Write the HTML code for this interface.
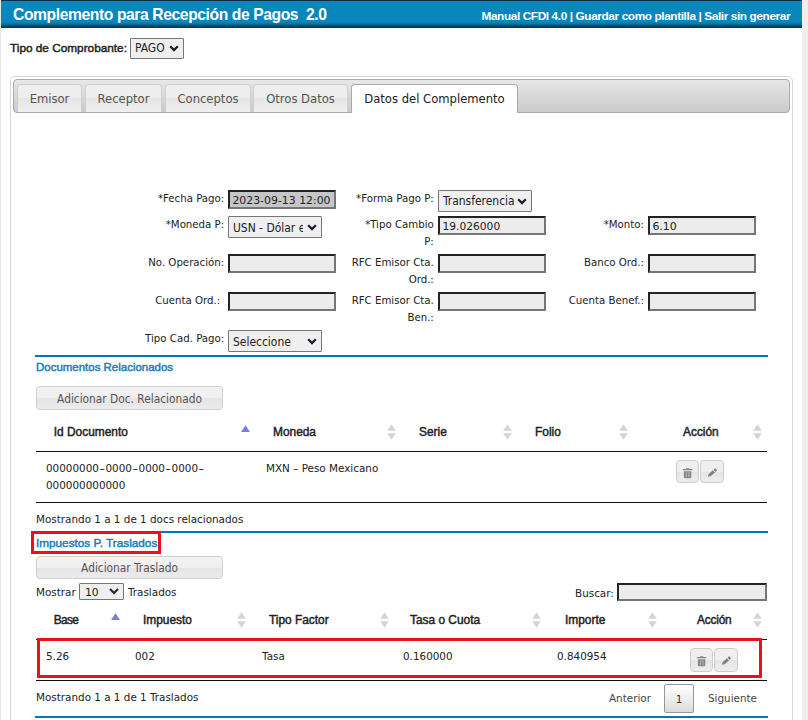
<!DOCTYPE html>
<html lang="es">
<head>
<meta charset="utf-8">
<title>Complemento para Recepción de Pagos 2.0</title>
<style>
html,body{margin:0;padding:0;}
body{width:808px;height:720px;position:relative;overflow:hidden;background:#fff;
  font-family:"DejaVu Sans Condensed","DejaVu Sans","Liberation Sans",sans-serif;font-size:11.4px;color:#222;}
.abs{position:absolute;white-space:nowrap;}
.tb{font-family:"Liberation Sans",sans-serif;font-weight:bold;}
.sbd{font-family:"Liberation Sans",sans-serif;font-weight:normal;-webkit-text-stroke:0.45px currentColor;}
/* header */
#hdr{position:absolute;left:1px;top:0;width:801px;height:28px;
  background:linear-gradient(#0a3046 0,#0a3046 1px,#0987bc 1px,#0987bc 22px,#0873a3 24px,#0a4a6e 26px,#0b2f48 28px);}
#edge{position:absolute;left:0;top:0;width:1px;height:720px;background:#e8e8e8;}
#sb{position:absolute;left:802px;top:0;width:6px;height:720px;background:#eeeeee;}
#title{left:13px;top:5.5px;font-size:15.7px;letter-spacing:-0.42px;line-height:18px;color:#fff;}
#links{left:481.5px;top:8.5px;font-size:11.8px;letter-spacing:-0.385px;line-height:14px;color:#fff;}
/* tabs */
#box{position:absolute;left:10px;top:76px;width:781px;height:660px;border:1px solid #d6d6d6;border-radius:5px;}
#nav{position:absolute;left:13px;top:79px;width:775px;height:32px;border:1px solid #aaa;border-radius:4px;
  background:linear-gradient(#e8e8e8,#d8d8d8 50%,#cbcbcb);}
.tab{position:absolute;top:84px;height:27px;border:1px solid #cfcfcf;border-bottom:none;border-radius:4px 4px 0 0;
  background:linear-gradient(#efefef 0,#ededed 50%,#e5e5e5 50%,#efefef 100%);color:#555;font-size:12.9px;line-height:27px;text-align:center;}
.tab.on{background:#fff;border-color:#aaa;color:#222;height:28px;}
/* form */
.lbl{position:absolute;text-align:right;white-space:nowrap;line-height:17px;font-size:11.35px;color:#222;}
.inp{position:absolute;box-sizing:border-box;height:19px;width:108px;background:#ececec;
  border:2px solid;border-color:#232323 #767676 #767676 #232323;font-family:"DejaVu Sans",sans-serif;font-size:10.9px;line-height:15px;padding:1px 0 0 2.4px;white-space:nowrap;overflow:hidden;}
.sel{position:absolute;box-sizing:border-box;height:22px;background:#efefef;border:1px solid #767676;border-radius:1px;
  font-size:11.95px;line-height:20px;padding-left:4px;white-space:nowrap;overflow:hidden;}
.sel svg{position:absolute;right:4.5px;top:6.5px;}
.sel span{display:inline-block;overflow:hidden;vertical-align:top;}
/* sections */
.hr{position:absolute;left:35px;width:733px;height:2px;background:#0079b6;}
.sec{color:#1b7db8;font-size:11.48px;line-height:14px;}
.btn{position:absolute;box-sizing:border-box;border:1px solid #cfcfcf;border-radius:4px;
  background:linear-gradient(#f3f3f3 0,#efefef 50%,#e4e4e4 50%,#ececec 100%);color:#555;font-size:11.8px;text-align:center;}
.th{font-size:11.9px;line-height:14px;color:#222;}
.td{font-family:"DejaVu Sans",sans-serif;font-size:10.4px;line-height:16px;color:#222;margin-top:0.4px;}
.bl{position:absolute;left:36px;width:731px;height:1px;background:#111;}
.ib{position:absolute;box-sizing:border-box;width:23px;height:23px;border:1px solid #cdcdcd;border-radius:4px;
  background:linear-gradient(#f0f0f0 0,#eeeeee 50%,#e5e5e5 50%,#ededed 100%);}
.ib svg{position:absolute;left:-1px;top:-1px;}
.sort{position:absolute;width:9px;height:16px;}
.red{position:absolute;box-sizing:border-box;border:3px solid #eb101e;}
.hy{display:inline-block;width:6.6px;text-align:center;transform:scaleX(1.5);}
</style>
</head>
<body>
<div id="edge"></div>
<div id="sb"></div>
<div id="hdr"></div>
<div id="title" class="abs tb">Complemento para Recepción de Pagos&nbsp;&nbsp;2.0</div>
<div id="links" class="abs tb">Manual CFDI 4.0 | Guardar como plantilla | Salir sin generar</div>

<div class="abs sbd" style="left:10px;top:41px;font-size:11.8px;line-height:14px;color:#222">Tipo de Comprobante:</div>
<div class="sel" style="left:130px;top:38px;width:54px;height:21px;line-height:19px">PAGO<svg width="10" height="7" viewBox="0 0 10 7" style="top:5.7px"><path d="M1.2 1.2l3.8 3.8 3.8-3.8" fill="none" stroke="#14202c" stroke-width="2.3"/></svg></div>

<div id="box"></div>
<div id="nav"></div>
<div class="tab" style="left:17px;width:63px;">Emisor</div>
<div class="tab" style="left:85px;width:75px;">Receptor</div>
<div class="tab" style="left:165px;width:84px;">Conceptos</div>
<div class="tab" style="left:253px;width:93px;">Otros Datos</div>
<div class="tab on" style="left:351px;width:165px;">Datos del Complemento</div>

<!-- form -->
<div class="lbl" style="right:583.8px;top:190px;">*Fecha Pago:</div>
<div class="inp" style="left:228px;top:190px;background:#c6c6c6;">2023-09-13 12:00</div>
<div class="lbl" style="right:374.2px;top:190px;">*Forma Pago P:</div>
<div class="sel" style="left:438px;top:190px;width:94px;line-height:21px">Transferencia<svg width="10" height="7" viewBox="0 0 10 7"><path d="M1.2 1.2l3.8 3.8 3.8-3.8" fill="none" stroke="#14202c" stroke-width="2.3"/></svg></div>

<div class="lbl" style="right:583.8px;top:216px;">*Moneda P:</div>
<div class="sel" style="left:228px;top:216px;width:94px;line-height:22.5px"><span style="width:69.5px">USN - Dólar en</span><svg width="10" height="7" viewBox="0 0 10 7"><path d="M1.2 1.2l3.8 3.8 3.8-3.8" fill="none" stroke="#14202c" stroke-width="2.3"/></svg></div>
<div class="lbl" style="right:374.2px;top:216px;">*Tipo Cambio<br>P:</div>
<div class="inp" style="left:438px;top:216px;font-size:10.7px">19.026000</div>
<div class="lbl" style="right:164px;top:216px;">*Monto:</div>
<div class="inp" style="left:648px;top:216px;">6.10</div>

<div class="lbl" style="right:583.8px;top:254px;">No. Operación:</div>
<div class="inp" style="left:228px;top:254px;"></div>
<div class="lbl" style="right:374.2px;top:254px;">RFC Emisor Cta.<br>Ord.:</div>
<div class="inp" style="left:438px;top:254px;"></div>
<div class="lbl" style="right:164px;top:254px;">Banco Ord.:</div>
<div class="inp" style="left:648px;top:254px;"></div>

<div class="lbl" style="right:587.8px;top:292px;">Cuenta Ord.:</div>
<div class="inp" style="left:228px;top:292px;"></div>
<div class="lbl" style="right:374.2px;top:292px;">RFC Emisor Cta.<br>Ben.:</div>
<div class="inp" style="left:438px;top:292px;"></div>
<div class="lbl" style="right:164px;top:292px;">Cuenta Benef.:</div>
<div class="inp" style="left:648px;top:292px;"></div>

<div class="lbl" style="right:583.8px;top:330px;">Tipo Cad. Pago:</div>
<div class="sel" style="left:228px;top:330px;width:94px;line-height:23px">Seleccione<svg width="10" height="7" viewBox="0 0 10 7"><path d="M1.2 1.2l3.8 3.8 3.8-3.8" fill="none" stroke="#14202c" stroke-width="2.3"/></svg></div>

<!-- documentos relacionados -->
<div class="hr" style="top:355px;"></div>
<div class="abs sbd sec" style="left:36px;top:360px;">Documentos Relacionados</div>
<div class="btn" style="left:36px;top:386px;width:187px;height:24px;line-height:24.6px;">Adicionar Doc. Relacionado</div>
<div class="abs sbd th" style="left:53.8px;top:425px;">Id Documento</div><svg class="sort" style="left:241.0px;top:425.0px" viewBox="0 0 9 16"><path d="M4.5 0.2L9 7H0z" fill="#7a80de"/></svg>
<div class="abs sbd th" style="left:273px;top:425px;">Moneda</div><svg class="sort" style="left:387.0px;top:424.0px" viewBox="0 0 9 16"><path d="M4.5 0.3L8.8 6.8H0.2z" fill="#d4d4d4"/><path d="M4.5 15.7L8.8 9.2H0.2z" fill="#d4d4d4"/></svg>
<div class="abs sbd th" style="left:419px;top:425px;">Serie</div><svg class="sort" style="left:503.0px;top:424.0px" viewBox="0 0 9 16"><path d="M4.5 0.3L8.8 6.8H0.2z" fill="#d4d4d4"/><path d="M4.5 15.7L8.8 9.2H0.2z" fill="#d4d4d4"/></svg>
<div class="abs sbd th" style="left:535px;top:425px;">Folio</div><svg class="sort" style="left:619.0px;top:424.0px" viewBox="0 0 9 16"><path d="M4.5 0.3L8.8 6.8H0.2z" fill="#d4d4d4"/><path d="M4.5 15.7L8.8 9.2H0.2z" fill="#d4d4d4"/></svg>
<div class="abs sbd th" style="left:683px;top:425px;">Acción</div><svg class="sort" style="left:753.0px;top:424.0px" viewBox="0 0 9 16"><path d="M4.5 0.3L8.8 6.8H0.2z" fill="#d4d4d4"/><path d="M4.5 15.7L8.8 9.2H0.2z" fill="#d4d4d4"/></svg>
<div class="bl" style="top:451px;"></div>
<div class="abs td" style="left:46px;top:459.6px;line-height:17px">00000000<span class="hy">-</span>0000<span class="hy">-</span>0000<span class="hy">-</span>0000<span class="hy">-</span><br>000000000000</div>
<div class="abs td" style="left:266px;top:460px;">MXN – Peso Mexicano</div>
<div class="ib" style="left:676px;top:460px;"><svg width="23" height="23" viewBox="-0.7 -1.1 23 23"><rect x="9.4" y="7.1" width="3.2" height="1.2" fill="#8a8a8a"/><rect x="6.2" y="8" width="9.4" height="1.1" fill="#7a7a7a"/><path d="M7.2 10.2h7.4v5.6q0 1.3-1.3 1.3h-4.8q-1.3 0-1.3-1.3z" fill="#858585"/><path d="M9.6 11v5.2M12.2 11v5.2" stroke="#c9c9c9" stroke-width="0.8"/></svg></div>
<div class="ib" style="left:700px;top:460px;width:24px;"><svg width="24" height="23" viewBox="-0.3 -1.8 24 23"><g transform="rotate(-42 11.4 11.5)" fill="#7d7d7d"><path d="M6.1 11.5l2.4-1.5v3z"/><rect x="8.5" y="10" width="5.9" height="3"/><rect x="15.2" y="10" width="2.2" height="3" rx="0.6"/></g></svg></div>
<div class="bl" style="top:502px;"></div>
<div class="abs td" style="left:36px;top:511px;">Mostrando 1 a 1 de 1 docs relacionados</div>

<!-- impuestos -->
<div class="hr" style="top:531px;"></div>
<div class="abs sbd sec" style="left:36px;top:536px;font-size:11.75px">Impuestos P. Traslados</div>
<div class="red" style="left:31px;top:531px;width:130px;height:23px;"></div>
<div class="btn" style="left:36px;top:556px;width:187px;height:23px;line-height:23px;">Adicionar Traslado</div>
<div class="abs td" style="left:36px;top:584px;">Mostrar</div>
<div class="sel" style="left:79px;top:583px;width:45px;height:17px;line-height:17px;font-family:'DejaVu Sans',sans-serif;font-size:10.7px;padding-left:5px">10<svg width="10" height="7" viewBox="0 0 10 7" style="top:4.4px"><path d="M1 1l4 4 4-4" fill="none" stroke="#1b2733" stroke-width="2"/></svg></div>
<div class="abs td" style="left:128px;top:584px;">Traslados</div>
<div class="abs td" style="left:575px;top:585px;">Buscar:</div>
<div class="inp" style="left:617px;top:583px;width:150px;height:18px;"></div>
<div class="abs sbd th" style="left:53.8px;top:613px;letter-spacing:-0.7px">Base</div><svg class="sort" style="left:111.0px;top:613.0px" viewBox="0 0 9 16"><path d="M4.5 0.2L9 7H0z" fill="#7a80de"/></svg>
<div class="abs sbd th" style="left:143px;top:613px;">Impuesto</div><svg class="sort" style="left:237.0px;top:612.0px" viewBox="0 0 9 16"><path d="M4.5 0.3L8.8 6.8H0.2z" fill="#d4d4d4"/><path d="M4.5 15.7L8.8 9.2H0.2z" fill="#d4d4d4"/></svg>
<div class="abs sbd th" style="left:269px;top:613px;">Tipo Factor</div><svg class="sort" style="left:380.0px;top:612.0px" viewBox="0 0 9 16"><path d="M4.5 0.3L8.8 6.8H0.2z" fill="#d4d4d4"/><path d="M4.5 15.7L8.8 9.2H0.2z" fill="#d4d4d4"/></svg>
<div class="abs sbd th" style="left:410px;top:613px;">Tasa o Cuota</div><svg class="sort" style="left:532.0px;top:612.0px" viewBox="0 0 9 16"><path d="M4.5 0.3L8.8 6.8H0.2z" fill="#d4d4d4"/><path d="M4.5 15.7L8.8 9.2H0.2z" fill="#d4d4d4"/></svg>
<div class="abs sbd th" style="left:565px;top:613px;">Importe</div><svg class="sort" style="left:648.0px;top:612.0px" viewBox="0 0 9 16"><path d="M4.5 0.3L8.8 6.8H0.2z" fill="#d4d4d4"/><path d="M4.5 15.7L8.8 9.2H0.2z" fill="#d4d4d4"/></svg>
<div class="abs sbd th" style="left:697px;top:613px;letter-spacing:-0.2px">Acción</div><svg class="sort" style="left:753.0px;top:612.0px" viewBox="0 0 9 16"><path d="M4.5 0.3L8.8 6.8H0.2z" fill="#d4d4d4"/><path d="M4.5 15.7L8.8 9.2H0.2z" fill="#d4d4d4"/></svg>
<div class="bl" style="top:639px;"></div>
<div class="abs td" style="left:46px;top:648px;">5.26</div>
<div class="abs td" style="left:135px;top:648px;">002</div>
<div class="abs td" style="left:262px;top:648px;">Tasa</div>
<div class="abs td" style="left:403px;top:648px;">0.160000</div>
<div class="abs td" style="left:557px;top:648px;">0.840954</div>
<div class="ib" style="left:690px;top:648px;height:24px;"><svg width="23" height="23" viewBox="-0.7 -1.1 23 23"><rect x="9.4" y="7.1" width="3.2" height="1.2" fill="#8a8a8a"/><rect x="6.2" y="8" width="9.4" height="1.1" fill="#7a7a7a"/><path d="M7.2 10.2h7.4v5.6q0 1.3-1.3 1.3h-4.8q-1.3 0-1.3-1.3z" fill="#858585"/><path d="M9.6 11v5.2M12.2 11v5.2" stroke="#c9c9c9" stroke-width="0.8"/></svg></div>
<div class="ib" style="left:714px;top:648px;width:24px;height:24px;"><svg width="24" height="23" viewBox="-0.3 -1.8 24 23"><g transform="rotate(-42 11.4 11.5)" fill="#7d7d7d"><path d="M6.1 11.5l2.4-1.5v3z"/><rect x="8.5" y="10" width="5.9" height="3"/><rect x="15.2" y="10" width="2.2" height="3" rx="0.6"/></g></svg></div>
<div class="red" style="left:37px;top:638px;width:725px;height:40px;"></div>
<div class="bl" style="top:680px;"></div>
<div class="abs td" style="left:36px;top:689px;">Mostrando 1 a 1 de 1 Traslados</div>
<div class="abs td" style="left:609px;top:690px;color:#444;">Anterior</div>
<div class="btn" style="left:664px;top:684px;width:30px;height:29px;line-height:27px;border-radius:2px;color:#333;background:linear-gradient(#fff,#dcdcdc);border-color:#979797;font-family:'DejaVu Sans',sans-serif;font-size:10.4px;line-height:28px;">1</div>
<div class="abs td" style="left:708px;top:690px;color:#444;">Siguiente</div>
<div class="hr" style="top:716px;"></div>

</body>
</html>
